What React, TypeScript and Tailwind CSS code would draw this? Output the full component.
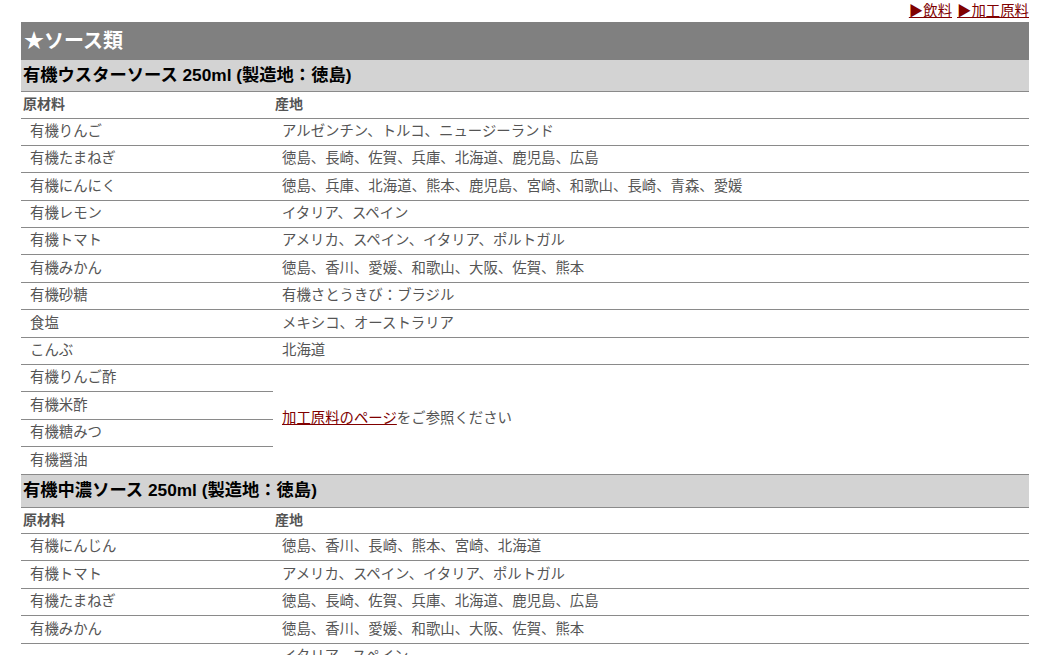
const sauces = [
  {
    name: "有機ウスターソース 250ml (製造地：徳島)",
    rows: [
      ["有機りんご", "アルゼンチン、トルコ、ニュージーランド"],
      ["有機たまねぎ", "徳島、長崎、佐賀、兵庫、北海道、鹿児島、広島"],
      ["有機にんにく", "徳島、兵庫、北海道、熊本、鹿児島、宮崎、和歌山、長崎、青森、愛媛"],
      ["有機レモン", "イタリア、スペイン"],
      ["有機トマト", "アメリカ、スペイン、イタリア、ポルトガル"],
      ["有機みかん", "徳島、香川、愛媛、和歌山、大阪、佐賀、熊本"],
      ["有機砂糖", "有機さとうきび：ブラジル"],
      ["食塩", "メキシコ、オーストラリア"],
      ["こんぶ", "北海道"],
    ],
    processed: ["有機りんご酢", "有機米酢", "有機糖みつ", "有機醤油"],
  },
  {
    name: "有機中濃ソース 250ml (製造地：徳島)",
    rows: [
      ["有機にんじん", "徳島、香川、長崎、熊本、宮崎、北海道"],
      ["有機トマト", "アメリカ、スペイン、イタリア、ポルトガル"],
      ["有機たまねぎ", "徳島、長崎、佐賀、兵庫、北海道、鹿児島、広島"],
      ["有機みかん", "徳島、香川、愛媛、和歌山、大阪、佐賀、熊本"],
    ],
    processed: [] as string[],
  },
];

const cell = "h-[27.4px] p-0 border-b border-[#8a8a8a] text-[14.4px] text-[#555] align-middle";
const head = "h-[26px] p-0 pl-[2px] text-left border-b border-[#8a8a8a] text-[14px] font-bold text-[#555]";

export default function App() {
  return (
    <div
      className="w-[1044px] h-[655px] overflow-hidden bg-white"
      style={{ fontFamily: '"Liberation Sans", "Noto Sans CJK JP", sans-serif' }}
    >
      <div className="ml-[21px] w-[1008px]">
        {/* top links */}
        <div className="flex justify-end gap-[5px] h-[22px] pt-[2px] text-[14.4px] leading-[18px]">
          <a href="#drink" className="text-[#800000] underline">▶飲料</a>
          <a href="#processed" className="text-[#800000] underline">▶加工原料</a>
        </div>

        {/* category bar */}
        <div className="h-[38px] bg-[#808080] pl-[3px] flex items-center text-white text-[20px] font-bold">
          ★ソース類
        </div>

        {sauces.map((s, si) => (
          <div key={s.name}>
            <div
              className={`${si === 0 ? "h-[32px]" : "h-[33px]"} bg-[#d3d3d3] border-b border-[#8a8a8a] pl-[2px] flex items-center text-[17.3px] font-bold text-black`}
            >
              {s.name}
            </div>
            <table className="w-full table-fixed border-collapse">
              <colgroup>
                <col className="w-[252px]" />
                <col />
              </colgroup>
              <tbody>
                <tr>
                  <th className={head}>原材料</th>
                  <th className={head}>産地</th>
                </tr>
                {s.rows.map(([a, b], i) => (
                  <tr key={i}>
                    <td className={`${cell} pl-[9px]`}>{a}</td>
                    <td className={`${cell} pl-[9px]`}>{b}</td>
                  </tr>
                ))}
                {s.processed.map((p, i) => (
                  <tr key={p}>
                    <td className={`${cell} pl-[9px]`}>{p}</td>
                    {i === 0 && (
                      <td rowSpan={s.processed.length} className={`${cell} pl-[9px]`}>
                        <a href="#processed" className="text-[#800000] underline">加工原料のページ</a>
                        をご参照ください
                      </td>
                    )}
                  </tr>
                ))}
                {si === 1 && (
                  <>
                    <tr>
                      <td rowSpan={3} className={`${cell} pl-[9px]`}>有機レモン</td>
                      <td className={`${cell} pl-[9px]`}>イタリア、スペイン</td>
                    </tr>
                    <tr>
                      <td className={`${cell} pl-[9px]`}>アルゼンチン、トルコ、ニュージーランド</td>
                    </tr>
                    <tr>
                      <td className={`${cell} pl-[9px]`}>北海道</td>
                    </tr>
                  </>
                )}
              </tbody>
            </table>
          </div>
        ))}
      </div>
    </div>
  );
}
